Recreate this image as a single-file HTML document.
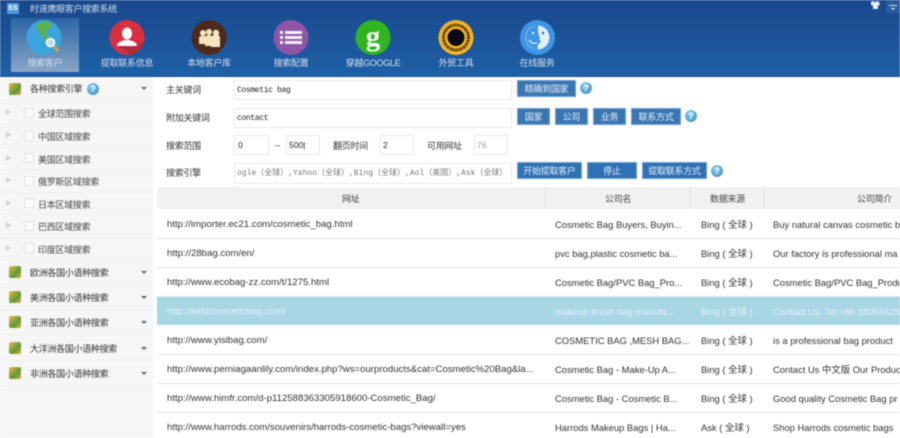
<!DOCTYPE html>
<html lang="zh"><head><meta charset="utf-8"><title>时速鹰眼客户搜索系统</title>
<style>
*{box-sizing:border-box;margin:0;padding:0}
html,body{width:900px;height:438px;overflow:hidden;background:#fff}
body{position:relative;font-family:"Liberation Sans","Noto Sans CJK SC",sans-serif;font-size:9px;letter-spacing:-.3px;color:#333}
#wrap{position:absolute;left:0;top:0;width:900px;height:438px;overflow:hidden;filter:blur(.4px)}
.a{position:absolute;white-space:nowrap}
#head{position:absolute;left:0;top:0;width:900px;height:77px;background:linear-gradient(180deg,#19488c,#1f60a6);border-bottom:1px solid #1a4f92}
#act{position:absolute;left:11px;top:18px;width:68px;height:54px;background:linear-gradient(180deg,#2c65a6,#8aa6c8)}
.m{position:absolute;top:57px;height:13px;line-height:13px;color:#d4e0ee;text-align:center;width:90px;white-space:nowrap}
#side{position:absolute;left:0;top:77px;width:153px;height:361px;background:#f6f6f6}
.s{position:absolute;left:38px;height:14px;line-height:14px;color:#444;white-space:nowrap;margin-top:2px}
.g{position:absolute;left:30px;height:14px;line-height:14px;color:#333;white-space:nowrap;margin-top:2px}
.cb{position:absolute;left:24px;width:10px;height:10px;background:#fafafa;border:1px solid #e2e2e2}
.tri{position:absolute;left:6px;width:0;height:0;border-left:5px solid #d0d0d0;border-top:3.5px solid transparent;border-bottom:3.5px solid transparent}
.dn{position:absolute;left:141px;width:0;height:0;border-top:3px solid #666;border-left:3px solid transparent;border-right:3px solid transparent}
.ic{position:absolute;left:9px;width:12px;height:12px;border-radius:2px;background:linear-gradient(135deg,#f2b945,#5d9a3a 60%,#e8a83a)}
.sl{position:absolute;left:0;width:153px;height:1px;background:#efefef}
.lb{position:absolute;height:14px;line-height:14px;color:#333;white-space:nowrap;margin-top:1px}
.in{position:absolute;background:#fff;border:1px solid #e9e9e9;font-family:"Liberation Mono","Noto Sans CJK SC",monospace;font-size:8px;line-height:19px;color:#222;padding-left:2px;overflow:hidden;white-space:nowrap}
.n{font-family:"Liberation Sans",sans-serif;font-size:8.5px;letter-spacing:0}
.bt{position:absolute;background:#3a76b4;border:1px solid #6f9fcc;color:#e6eef6;text-align:center;height:17px;line-height:16px;white-space:nowrap}
.q{position:absolute;width:12px;height:12px;border-radius:50%;background:radial-gradient(circle at 40% 30%,#8fd0ee,#2f86c0);color:#fff;font-size:9px;letter-spacing:0;font-weight:bold;line-height:12px;text-align:center}
#th{position:absolute;left:157px;top:187px;width:743px;height:22px;background:#f1f1f1}
.sep{position:absolute;top:187px;width:1px;height:22px;background:#e2e2e2}
.hd{position:absolute;top:192px;height:14px;line-height:14px;color:#444;white-space:nowrap}
.r{position:absolute;left:157px;width:743px;height:1px;background:#e6e6e6}
.x{position:absolute;font-size:9.6px;letter-spacing:0;height:14px;line-height:14px;color:#333;white-space:nowrap;margin-top:1px}
.y{font-size:9.4px}
.w{color:#e6f2f7}
</style></head><body><div id="wrap">

<div id="head"></div>
<div id="act"></div>
<div class="a" style="left:7px;top:3px;width:12px;height:11px;background:#4d9ad8;color:#fff;font-size:7px;letter-spacing:0;line-height:11px;text-align:center;font-weight:bold">ES</div>
<div class="a" style="left:30px;top:3px;line-height:13px;color:#d2deec">时速鹰眼客户搜索系统</div>

<svg style="position:absolute;left:868px;top:0" width="32" height="14" viewBox="0 0 32 14"><path d="M3 2l2-1 1 1h2l1-1 2 1 1 3-2 .5V9H5V5.500L3 5z" fill="#e8eef5"/><rect x="18" y="1" width="14" height="12" fill="#2a5d9c"/><path d="M21 5h8v1h-8zM22.500 8h5l-2.500 2z" fill="#cfdcea"/></svg>

<svg style="position:absolute;left:0;top:0" width="600" height="60" viewBox="0 0 600 60">
<circle cx="44" cy="37.500" r="17.500" fill="#3ba4dc"/>
<path d="M36 25C40 21 48 20 52 24L50 28 46 31C46 34 47 37 50 38L52 44 49 47C46 42 44 40 42 35 39 33 37 29 36 25Z" fill="#5cb04a"/>
<circle cx="50.500" cy="42.500" r="4" fill="#b9dbe4" stroke="#fff" stroke-width="1.500"/>
<path d="M53.500 46l4.500 5" stroke="#e9a137" stroke-width="2.500"/>
<circle cx="127" cy="37.500" r="17.500" fill="#d9303f"/>
<path d="M117 46H137L144 41A17.500 17.500 0 0 1 131 54.500Z" fill="#b22a38"/>
<ellipse cx="127" cy="33.500" rx="5" ry="6" fill="#fff"/><path d="M117 46c0-4 5-5 8-6h4c3 1 8 2 8 6z" fill="#fff"/>
<circle cx="209" cy="37.500" r="17.500" fill="#4d2a1c"/>
<g fill="#f3e6bd"><circle cx="203" cy="33" r="3"/><circle cx="209" cy="32" r="3"/><circle cx="216" cy="33" r="3.200"/><path d="M199 44v-6c0-2 2-2 4-2s3 0 3 2v6z"/><path d="M205 46v-8c0-2 2-3 4-3s3 1 3 3v8z"/><path d="M211 47v-9c0-2 2-3 5-3s4 1 4 3v9z"/></g>
<circle cx="291" cy="37.500" r="17.500" fill="#8f56a5"/>
<g fill="#f4eef7"><rect x="280" y="31" width="3" height="3"/><rect x="280" y="36" width="3" height="3"/><rect x="280" y="41" width="3" height="3"/><rect x="285" y="31" width="17" height="3"/><rect x="285" y="36" width="17" height="3"/><rect x="285" y="41" width="17" height="3"/></g>
<circle cx="373" cy="37.500" r="17.500" fill="#2fb51e"/>
<circle cx="456" cy="37.500" r="17.500" fill="#f5b324"/>
<circle cx="456" cy="37.500" r="12.500" fill="none" stroke="#2c1e06" stroke-width="3" stroke-dasharray="1.500 1"/>
<circle cx="456" cy="37.500" r="10.500" fill="#f5b324"/><circle cx="456" cy="37.500" r="8.500" fill="#0a0a14"/>
<circle cx="537.500" cy="37.500" r="17.500" fill="#3f94e4"/>
<circle cx="537.500" cy="37.500" r="12" fill="#e4f0fb"/>
<path d="M538 25.500c-6 0-12 5-12 12s6 12 12 12c-1-3 0-5 1-6l2-2-2-2 1-2c-2-2-2-8-2-12z" fill="#3f94e4"/>
<path d="M529 40c2 3 5 4 8 3" fill="none" stroke="#e4f0fb" stroke-width="1.200"/>
<circle cx="533" cy="33" r="1.200" fill="#e4f0fb"/><ellipse cx="543" cy="33" rx="1" ry="1.600" fill="#3a6ea8"/>
</svg>
<div class="a" style="left:373px;top:37.500px;transform:translate(-50%,-50%);font-family:'Liberation Serif',serif;font-size:29px;letter-spacing:0;font-weight:bold;color:#fff;line-height:29px;margin-top:-1px">g</div>

<div class="m" style="left:0">搜索客户</div>
<div class="m" style="left:82px">提取联系信息</div>
<div class="m" style="left:164px">本地客户库</div>
<div class="m" style="left:246px">搜索配置</div>
<div class="m" style="left:328px">穿越GOOGLE</div>
<div class="m" style="left:411px">外贸工具</div>
<div class="m" style="left:492px">在线服务</div>

<div id="side"></div>
<div class="ic" style="top:83px"></div><div class="g" style="top:80px">各种搜索引擎</div><div class="q" style="left:87px;top:83px">?</div><div class="dn" style="top:87px"></div>
<div class="sl" style="top:100px"></div>
<div class="tri" style="top:109px"></div><div class="cb" style="top:108px"></div><div class="s" style="top:105px">全球范围搜索</div>
<div class="sl" style="top:124px"></div>
<div class="tri" style="top:132px"></div><div class="cb" style="top:131px"></div><div class="s" style="top:128px">中国区域搜索</div>
<div class="sl" style="top:147px"></div>
<div class="tri" style="top:155px"></div><div class="cb" style="top:153px"></div><div class="s" style="top:151px">美国区域搜索</div>
<div class="sl" style="top:169px"></div>
<div class="tri" style="top:177px"></div><div class="cb" style="top:176px"></div><div class="s" style="top:173px">俄罗斯区域搜索</div>
<div class="sl" style="top:192px"></div>
<div class="tri" style="top:200px"></div><div class="cb" style="top:198px"></div><div class="s" style="top:196px">日本区域搜索</div>
<div class="sl" style="top:214px"></div>
<div class="tri" style="top:222px"></div><div class="cb" style="top:221px"></div><div class="s" style="top:218px">巴西区域搜索</div>
<div class="sl" style="top:237px"></div>
<div class="tri" style="top:245px"></div><div class="cb" style="top:243px"></div><div class="s" style="top:241px">印度区域搜索</div>
<div class="sl" style="top:259px"></div>
<div class="ic" style="top:266px"></div><div class="g" style="top:264px">欧洲各国小语种搜索</div><div class="dn" style="top:271px"></div>
<div class="sl" style="top:284px"></div>
<div class="ic" style="top:291px"></div><div class="g" style="top:289px">美洲各国小语种搜索</div><div class="dn" style="top:296px"></div>
<div class="sl" style="top:309px"></div>
<div class="ic" style="top:316px"></div><div class="g" style="top:314px">亚洲各国小语种搜索</div><div class="dn" style="top:321px"></div>
<div class="sl" style="top:334px"></div>
<div class="ic" style="top:342px"></div><div class="g" style="top:340px">大洋洲各国小语种搜索</div><div class="dn" style="top:347px"></div>
<div class="sl" style="top:360px"></div>
<div class="ic" style="top:367px"></div><div class="g" style="top:365px">非洲各国小语种搜索</div><div class="dn" style="top:372px"></div>
<div class="sl" style="top:385px"></div>

<div class="lb" style="left:166px;top:82px">主关键词</div>
<div class="in" style="left:234px;top:80px;width:278px;height:20px;letter-spacing:-.35px">Cosmetic bag</div>
<div class="bt" style="left:517px;top:80px;width:59px">精确到国家</div>
<div class="q" style="left:580px;top:82px">?</div>

<div class="lb" style="left:166px;top:110px">附加关键词</div>
<div class="in" style="left:234px;top:108px;width:278px;height:20px;letter-spacing:-.35px">contact</div>
<div class="bt" style="left:517px;top:108px;width:33px">国家</div>
<div class="bt" style="left:555px;top:108px;width:33px">公司</div>
<div class="bt" style="left:593px;top:108px;width:33px">业务</div>
<div class="bt" style="left:631px;top:108px;width:50px">联系方式</div>
<div class="q" style="left:685px;top:110px">?</div>

<div class="lb" style="left:166px;top:138px">搜索范围</div>
<div class="in n" style="left:234px;top:135px;width:35px;height:20px;padding-left:3px">0</div>
<div class="lb" style="left:275px;top:137px">–</div>
<div class="in n" style="left:286px;top:135px;width:34px;height:20px;padding-left:2px">500|</div>
<div class="lb" style="left:333px;top:138px">翻页时间</div>
<div class="in n" style="left:380px;top:135px;width:34px;height:20px;padding-left:2px">2</div>
<div class="lb" style="left:427px;top:138px">可用网址</div>
<div class="in n" style="left:474px;top:135px;width:34px;height:20px;padding-left:2px;color:#999">76</div>

<div class="lb" style="left:166px;top:165px">搜索引擎</div>
<div class="in" style="left:234px;top:163px;width:278px;height:21px;color:#777;line-height:19px;letter-spacing:0">ogle（全球）,Yahoo（全球）,Bing（全球）,Aol（美国）,Ask（全球）</div>
<div class="bt" style="left:517px;top:162px;width:65px;background:#2f72b4">开始提取客户</div>
<div class="bt" style="left:587px;top:162px;width:50px;background:#2f72b4">停止</div>
<div class="bt" style="left:642px;top:162px;width:65px;background:#2f72b4">提取联系方式</div>
<div class="q" style="left:711px;top:165px">?</div>

<div id="th"></div>
<div class="sep" style="left:545px"></div><div class="sep" style="left:690px"></div><div class="sep" style="left:763px"></div>
<div class="hd" style="left:342px">网址</div>
<div class="hd" style="left:605px">公司名</div>
<div class="hd" style="left:710px">数据来源</div>
<div class="hd" style="left:857px">公司简介</div>

<div class="a" style="left:157px;top:296px;width:743px;height:29px;background:#a8d6e5"></div>
<div class="r" style="top:238px"></div><div class="r" style="top:267px"></div><div class="r" style="top:296px"></div>
<div class="r" style="top:354px"></div><div class="r" style="top:383px"></div><div class="r" style="top:412px"></div>

<div class="x" style="left:167px;top:217px">http://importer.ec21.com/cosmetic_bag.html</div>
<div class="x y" style="left:555px;top:217px">Cosmetic Bag Buyers, Buyin...</div>
<div class="x y" style="left:701px;top:217px">Bing ( 全球 )</div>
<div class="x y" style="left:773px;top:217px">Buy natural canvas cosmetic bag</div>

<div class="x" style="left:167px;top:246px">http://28bag.com/en/</div>
<div class="x y" style="left:555px;top:246px">pvc bag,plastic cosmetic ba...</div>
<div class="x y" style="left:701px;top:246px">Bing ( 全球 )</div>
<div class="x y" style="left:773px;top:246px">Our factory is professional ma</div>

<div class="x" style="left:167px;top:275px">http://www.ecobag-zz.com/t/1275.html</div>
<div class="x y" style="left:555px;top:275px">Cosmetic Bag/PVC Bag_Pro...</div>
<div class="x y" style="left:701px;top:275px">Bing ( 全球 )</div>
<div class="x y" style="left:773px;top:275px">Cosmetic Bag/PVC Bag_Produ</div>

<div class="x w" style="left:167px;top:304px">http://kiddcosmeticbag.com/</div>
<div class="x y w" style="left:555px;top:304px">makeup brush bag manufa...</div>
<div class="x y w" style="left:701px;top:304px">Bing ( 全球 )</div>
<div class="x y w" style="left:773px;top:304px">Contact Us. Tel:+86-18056626</div>

<div class="x" style="left:167px;top:333px">http://www.yisibag.com/</div>
<div class="x y" style="left:555px;top:333px">COSMETIC BAG ,MESH BAG...</div>
<div class="x y" style="left:701px;top:333px">Bing ( 全球 )</div>
<div class="x y" style="left:773px;top:333px">is a professional bag product</div>

<div class="x" style="left:167px;top:362px">http://www.perniagaanlily.com/index.php?ws=ourproducts&amp;cat=Cosmetic%20Bag&amp;la...</div>
<div class="x y" style="left:555px;top:362px">Cosmetic Bag - Make-Up A...</div>
<div class="x y" style="left:701px;top:362px">Bing ( 全球 )</div>
<div class="x y" style="left:773px;top:362px">Contact Us 中文版 Our Produc</div>

<div class="x" style="left:167px;top:391px">http://www.himfr.com/d-p112588363305918600-Cosmetic_Bag/</div>
<div class="x y" style="left:555px;top:391px">Cosmetic Bag - Cosmetic B...</div>
<div class="x y" style="left:701px;top:391px">Bing ( 全球 )</div>
<div class="x y" style="left:773px;top:391px">Good quality Cosmetic Bag pr</div>

<div class="x" style="left:167px;top:420px">http://www.harrods.com/souvenirs/harrods-cosmetic-bags?viewall=yes</div>
<div class="x y" style="left:555px;top:420px">Harrods Makeup Bags | Ha...</div>
<div class="x y" style="left:701px;top:420px">Ask ( 全球 )</div>
<div class="x y" style="left:773px;top:420px">Shop Harrods cosmetic bags</div>

</div></body></html>
